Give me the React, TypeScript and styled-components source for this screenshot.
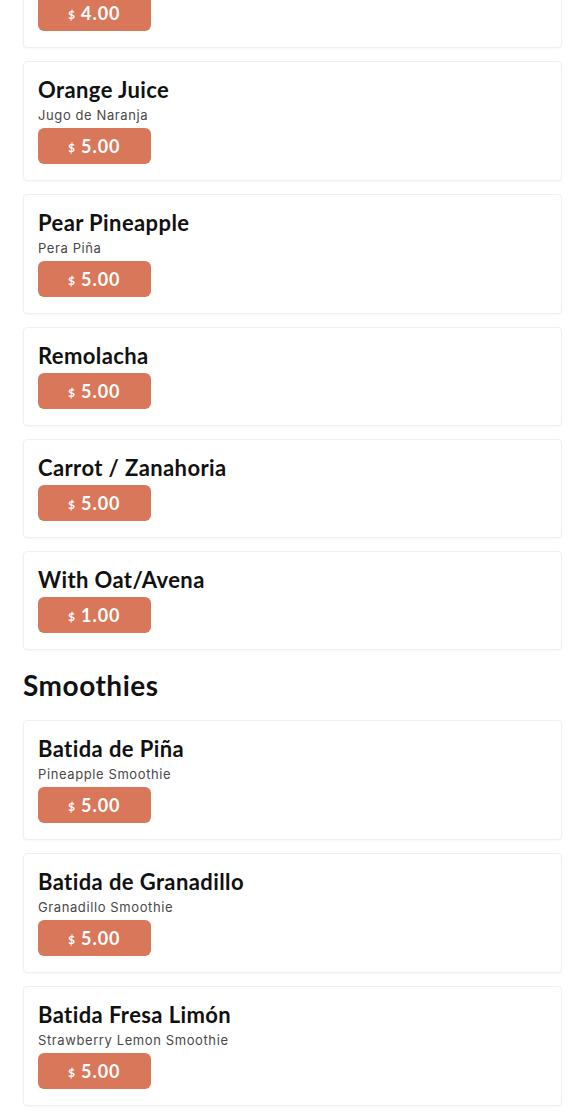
import styled, { createGlobalStyle } from 'styled-components';

type Item = { title: string; subtitle?: string; price: string };

const juices: Item[] = [
  { title: 'Lemonade', price: '4.00' },
  { title: 'Orange Juice', subtitle: 'Jugo de Naranja', price: '5.00' },
  { title: 'Pear Pineapple', subtitle: 'Pera Piña', price: '5.00' },
  { title: 'Remolacha', price: '5.00' },
  { title: 'Carrot / Zanahoria', price: '5.00' },
  { title: 'With Oat/Avena', price: '1.00' },
];

const smoothies: Item[] = [
  { title: 'Batida de Piña', subtitle: 'Pineapple Smoothie', price: '5.00' },
  { title: 'Batida de Granadillo', subtitle: 'Granadillo Smoothie', price: '5.00' },
  { title: 'Batida Fresa Limón', subtitle: 'Strawberry Lemon Smoothie', price: '5.00' },
];

function MenuCard({ item }: { item: Item }) {
  return (
    <Card>
      <Title>{item.title}</Title>
      {item.subtitle && <Subtitle>{item.subtitle}</Subtitle>}
      <PriceButton>
        <Currency>$</Currency>
        <Amount>{item.price}</Amount>
      </PriceButton>
    </Card>
  );
}

export default function App() {
  return (
    <>
      <GlobalStyle />
      <Page>
        {juices.map((item) => (
          <MenuCard key={item.title} item={item} />
        ))}
        <SectionTitle>Smoothies</SectionTitle>
        {smoothies.map((item) => (
          <MenuCard key={item.title} item={item} />
        ))}
      </Page>
    </>
  );
}

const GlobalStyle = createGlobalStyle`
  html, body {
    margin: 0;
    padding: 0;
    background: #ffffff;
    font-family: Lato, "Liberation Sans", sans-serif;
    color: #111;
  }
`;

const Page = styled.div`
  display: flex;
  flex-direction: column;
  gap: 13px;
  padding: 0 23px 40px;
  margin-top: -51px;
`;

const Card = styled.div`
  display: flex;
  flex-direction: column;
  align-items: flex-start;
  padding: 15px 14px 16px;
  background: #fff;
  border: 1px solid #f0f0f0;
  border-radius: 4px;
  box-shadow: 0 1px 2px rgba(0, 0, 0, 0.03);
`;

const Title = styled.div`
  font-family: Lato, "Liberation Sans", sans-serif;
  font-weight: 700;
  font-size: 22px;
  line-height: 26px;
  letter-spacing: 0.4px;
  color: #111;
`;

const Subtitle = styled.div`
  margin-top: 3px;
  font-family: Inter, "Noto Sans", sans-serif;
  font-size: 13px;
  line-height: 18px;
  letter-spacing: 0.6px;
  color: #484848;
`;

const PriceButton = styled.div`
  margin-top: 4px;
  height: 36px;
  padding: 0 30px;
  display: flex;
  align-items: center;
  justify-content: center;
  gap: 6px;
  background: #d9775a;
  border-radius: 6px;
  color: #fff;
  font-family: Lato, "Liberation Sans", sans-serif;
  font-weight: 700;
`;

const Currency = styled.span`
  font-size: 12px;
  padding-top: 3px;
`;

const Amount = styled.span`
  font-size: 18px;
  letter-spacing: 1px;
`;

const SectionTitle = styled.h2`
  margin: 0;
  font-family: Lato, "Liberation Sans", sans-serif;
  font-weight: 700;
  font-size: 28px;
  line-height: 44px;
  letter-spacing: 0.5px;
  color: #111;
`;
